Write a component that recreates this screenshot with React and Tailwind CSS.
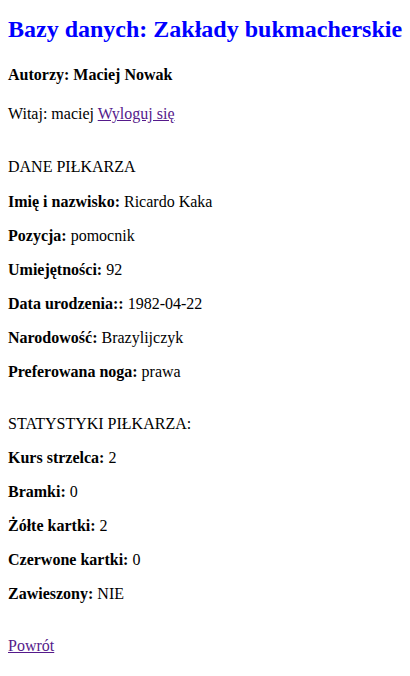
export default function App() {
  const dane = [
    ['Imię i nazwisko:', 'Ricardo Kaka'],
    ['Pozycja:', 'pomocnik'],
    ['Umiejętności:', '92'],
    ['Data urodzenia::', '1982-04-22'],
    ['Narodowość:', 'Brazylijczyk'],
    ['Preferowana noga:', 'prawa'],
  ]
  const stats = [
    ['Kurs strzelca:', '2'],
    ['Bramki:', '0'],
    ['Żółte kartki:', '2'],
    ['Czerwone kartki:', '0'],
    ['Zawieszony:', 'NIE'],
  ]

  return (
    <div className="min-h-screen bg-white px-2 pt-[16px] text-[16px] leading-[normal] text-black font-['Liberation_Serif','Times_New_Roman',serif]">
      <h1 className="whitespace-nowrap text-[24px] font-bold leading-[normal] text-[#0000ff]">
        Bazy danych: Zakłady bukmacherskie
      </h1>
      <h4 className="mt-[23px] font-bold">Autorzy: Maciej Nowak</h4>
      <p className="mt-[21px]">
        Witaj: maciej <a href="#" className="text-[#551a8b] underline">Wyloguj się</a>
      </p>

      <p className="mt-[35px]">DANE PIŁKARZA</p>
      {dane.map(([k, v], i) => (
        <p key={k} className={i === 0 ? 'mt-[17px]' : 'mt-[16px]'}>
          <b>{k}</b> {v}
        </p>
      ))}

      <p className="mt-[34px]">STATYSTYKI PIŁKARZA:</p>
      {stats.map(([k, v]) => (
        <p key={k} className="mt-[16px]">
          <b>{k}</b> {v}
        </p>
      ))}

      <p className="mt-[34px]">
        <a href="#" className="text-[#551a8b] underline">Powrót</a>
      </p>
    </div>
  )
}
